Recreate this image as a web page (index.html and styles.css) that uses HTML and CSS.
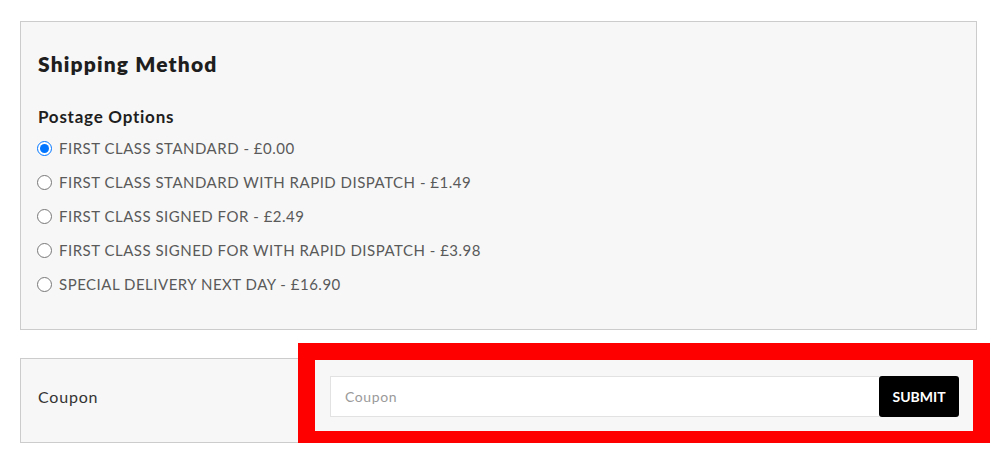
FILE: index.html
```html
<!DOCTYPE html>
<html lang="en">
<head>
<meta charset="utf-8">
<title>Shipping Method</title>
<link rel="stylesheet" href="styles.css">
</head>
<body>
<div class="page">
  <section class="panel shipping">
    <h2 class="panel-title">Shipping Method</h2>
    <h3 class="group-title">Postage Options</h3>
    <ul class="options">
      <li><label class="option"><input type="radio" name="postage" checked><span>FIRST CLASS STANDARD - £0.00</span></label></li>
      <li><label class="option"><input type="radio" name="postage"><span>FIRST CLASS STANDARD WITH RAPID DISPATCH - £1.49</span></label></li>
      <li><label class="option"><input type="radio" name="postage"><span>FIRST CLASS SIGNED FOR - £2.49</span></label></li>
      <li><label class="option"><input type="radio" name="postage"><span>FIRST CLASS SIGNED FOR WITH RAPID DISPATCH - £3.98</span></label></li>
      <li><label class="option"><input type="radio" name="postage"><span>SPECIAL DELIVERY NEXT DAY - £16.90</span></label></li>
    </ul>
  </section>
  <section class="panel coupon">
    <div class="coupon-label">Coupon</div>
    <div class="coupon-field">
      <input class="coupon-input" type="text" placeholder="Coupon">
      <button class="coupon-submit" type="button">SUBMIT</button>
    </div>
    <div class="highlight"></div>
  </section>
</div>
</body>
</html>
```
FILE: styles.css
```css
* { box-sizing: border-box; }
html, body { margin: 0; padding: 0; background: #ffffff; }
body { font-family: "Lato", "Noto Sans", sans-serif; color: #222; }
.page {
  padding: 21px 23px 0 20px;
  display: flex;
  flex-direction: column;
  gap: 28px;
}
.panel {
  background: #f7f7f7;
  border: 1px solid #cccccc;
}
.shipping {
  height: 309px;
  padding: 30px 17px 0 17px;
}
.panel-title {
  margin: 0;
  font-size: 21px;
  line-height: 24px;
  font-weight: 800;
  letter-spacing: 1.15px;
  color: #1e1e1e;
}
.group-title {
  margin: 30px 0 0 0;
  font-size: 17px;
  line-height: 22px;
  font-weight: 700;
  letter-spacing: 0.75px;
  color: #1e1e1e;
}
.options {
  list-style: none;
  margin: 3px 0 0 0;
  padding: 0;
}
.options li {
  height: 34px;
  display: flex;
  align-items: center;
}
.option {
  display: flex;
  align-items: center;
  gap: 7px;
  font-size: 15px;
  letter-spacing: 0.5px;
  color: #5a5a5a;
}
.option input {
  margin: 0 0 0 -1px;
  width: 15px;
  height: 15px;
}
.coupon {
  position: relative;
  height: 85px;
  padding: 17px 17px 25px 17px;
  display: grid;
  grid-template-columns: 292px 1fr;
  align-items: center;
}
.coupon-label {
  font-size: 16px;
  letter-spacing: 0.8px;
  color: #333;
}
.coupon-field {
  display: flex;
  height: 41px;
}
.coupon-input {
  flex: 1;
  height: 41px;
  border: 1px solid #e2e2e2;
  border-right: none;
  background: #fff;
  padding: 0 14px;
  font-family: inherit;
  font-size: 14px;
  letter-spacing: 0.6px;
  color: #333;
  outline: none;
}
.coupon-input::placeholder { color: #9a9a9a; }
.coupon-submit {
  width: 80px;
  height: 41px;
  border: none;
  border-radius: 3px;
  background: #000;
  color: #fff;
  font-family: inherit;
  font-size: 14px;
  font-weight: 700;
  padding: 0;
}
.highlight {
  position: absolute;
  left: 277px;
  top: -16px;
  width: 692px;
  height: 105px;
  border: 17px solid #ff0000;
  pointer-events: none;
}
```
